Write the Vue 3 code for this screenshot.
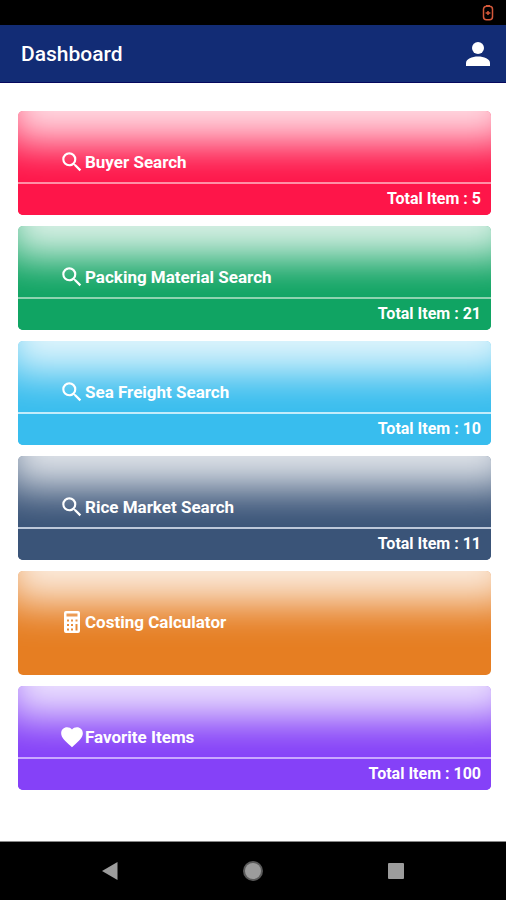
<script setup>
const cards = [
  { title: 'Buyer Search', icon: 'search', tone: 'red', total: 5 },
  { title: 'Packing Material Search', icon: 'search', tone: 'green', total: 21 },
  { title: 'Sea Freight Search', icon: 'search', tone: 'sky', total: 10 },
  { title: 'Rice Market Search', icon: 'search', tone: 'slate', total: 11 },
  { title: 'Costing Calculator', icon: 'calculator', tone: 'orange', total: null },
  { title: 'Favorite Items', icon: 'heart', tone: 'violet', total: 100 },
]
</script>

<template>
  <div class="screen">
    <div class="status">
      <svg class="battery" viewBox="0 0 12 18" aria-hidden="true">
        <path d="M4 1.750h4M4.500 2.250a3 3 0 0 0-3 3v7.500a3 3 0 0 0 3 3h3a3 3 0 0 0 3-3v-7.500a3 3 0 0 0-3-3z" />
        <path d="M3.600 9h4.800M6 7v4" />
      </svg>
    </div>

    <header class="bar">
      <h1>Dashboard</h1>
      <button class="profile" type="button" aria-label="Profile">
        <svg viewBox="0 0 24 24" aria-hidden="true">
          <circle cx="12" cy="6" r="6" />
          <path d="M0 24v-3c0-4 6-6.500 12-6.500S24 17 24 21v3z" />
        </svg>
      </button>
    </header>

    <main class="list">
      <button v-for="card in cards" :key="card.title" type="button" class="card" :class="card.tone">
        <span class="top">
          <svg v-if="card.icon === 'search'" class="icon" viewBox="0 0 24 24" aria-hidden="true">
            <path d="M15.500 14h-.79l-.28-.27A6.470 6.470 0 0 0 16 9.500 6.500 6.500 0 1 0 9.500 16c1.610 0 3.090-.59 4.230-1.570l.27.28v.79l5 4.990L20.490 19l-4.990-5zm-6 0C7.010 14 5 11.990 5 9.500S7.010 5 9.500 5 14 7.010 14 9.500 11.990 14 9.500 14z" />
          </svg>
          <svg v-else-if="card.icon === 'calculator'" class="icon" viewBox="0 0 26 26" aria-hidden="true">
            <path fill-rule="evenodd" d="M7 2h12A2 2 0 0 1 21 4v18a2 2 0 0 1-2 2H7a2 2 0 0 1-2-2V4a2 2 0 0 1 2-2zM7.500 4.500v3h11v-3zM8 10.500v2h2v-2zM12 10.500v2h2v-2zM16.500 10.500v2h2v-2zM8 15v2h2v-2zM12 15v2h2v-2zM8 19.500v2h2v-2zM12 19.500v2h2v-2zM16.500 15v6.500h2V15z" />
          </svg>
          <svg v-else class="icon" viewBox="0 0 24 24" aria-hidden="true">
            <path d="M12 21.350l-1.450-1.320C5.400 15.360 2 12.280 2 8.500 2 5.420 4.420 3 7.500 3c1.740 0 3.410.81 4.500 2.090C13.090 3.810 14.760 3 16.500 3 19.580 3 22 5.420 22 8.500c0 3.780-3.400 6.860-8.550 11.540L12 21.350z" />
          </svg>
          <span class="title">{{ card.title }}</span>
        </span>
        <span v-if="card.total !== null" class="total">Total Item : {{ card.total }}</span>
      </button>
    </main>

    <nav class="keys">
      <button type="button" aria-label="Back">
        <svg viewBox="0 0 20 20" aria-hidden="true"><path d="M2 10 17.500 1v18z" /></svg>
      </button>
      <button type="button" aria-label="Home">
        <svg viewBox="0 0 20 20" aria-hidden="true">
          <circle class="ring" cx="10" cy="10" r="10" />
          <circle cx="10" cy="10" r="8" />
        </svg>
      </button>
      <button type="button" aria-label="Recent apps">
        <svg viewBox="0 0 20 20" aria-hidden="true"><rect x="2" y="2" width="16" height="16" rx="1" /></svg>
      </button>
    </nav>
  </div>
</template>

<style>
body {
  margin: 0;
  background: #fff;
}
</style>

<style scoped>
.screen {
  display: flex;
  flex-direction: column;
  min-height: 100vh;
  font-family: Roboto, "Liberation Sans", sans-serif;
  color: #fff;
}
button {
  margin: 0;
  padding: 0;
  border: 0;
  background: none;
  color: inherit;
  font: inherit;
  cursor: pointer;
}
svg {
  display: block;
  fill: currentColor;
}
.status {
  display: flex;
  justify-content: flex-end;
  align-items: center;
  box-sizing: border-box;
  height: 25px;
  padding: 1px 12px 0;
  background: #000;
}
.battery {
  width: 12px;
  height: 18px;
  fill: none;
  stroke: #d4583a;
  stroke-width: 1.5;
}
.bar {
  display: flex;
  align-items: center;
  justify-content: space-between;
  box-sizing: border-box;
  height: 58px;
  padding: 1px 16px 0 21px;
  border-bottom: 1px solid #06085e;
  background: #122c75;
}
h1 {
  margin: 0;
  font-size: 21px;
  line-height: 28px;
  font-weight: 500;
}
.profile svg {
  width: 24px;
  height: 24px;
}
.list {
  flex: 1;
  display: flex;
  flex-direction: column;
  gap: 11px;
  padding: 28px 15px 28px 18px;
}
.card {
  position: relative;
  display: flex;
  flex-direction: column;
  height: 104px;
  border-radius: 5px;
  overflow: hidden;
  background: var(--tone);
  font-size: 16px;
  line-height: 20px;
  font-weight: 700;
}
.card::before {
  content: "";
  position: absolute;
  top: -70px;
  left: -12px;
  right: -24px;
  height: 102px;
  background: rgba(255, 255, 255, 0.84);
  filter: blur(20px);
}
.red { --tone: #fe1549; --line: #ff8fa5; }
.green { --tone: #10a463; --line: #8ed3b0; }
.sky { --tone: #38bdee; --line: #c3ecfb; }
.slate { --tone: #3a5478; --line: #bcc8da; }
.orange { --tone: #e67e22; --line: #f3c090; }
.violet { --tone: #8541f8; --line: #c9a8ff; }
.top {
  position: relative;
  display: flex;
  align-items: center;
  box-sizing: border-box;
  height: 71px;
  padding: 30px 41px 0;
}
.icon {
  width: 26px;
  height: 26px;
}
.title {
  font-size: 17px;
}
.total {
  position: relative;
  padding: 5px 10px 6px;
  border-top: 2px solid var(--line);
  background: var(--tone);
  text-align: right;
}
.keys {
  display: flex;
  justify-content: space-around;
  align-items: center;
  box-sizing: border-box;
  height: 59px;
  padding: 0 38px;
  border-top: 1px solid #888;
  background: #000;
  color: #9c9c9c;
}
.keys svg {
  width: 20px;
  height: 20px;
}
.ring {
  fill: #5a5a5a;
}
</style>
